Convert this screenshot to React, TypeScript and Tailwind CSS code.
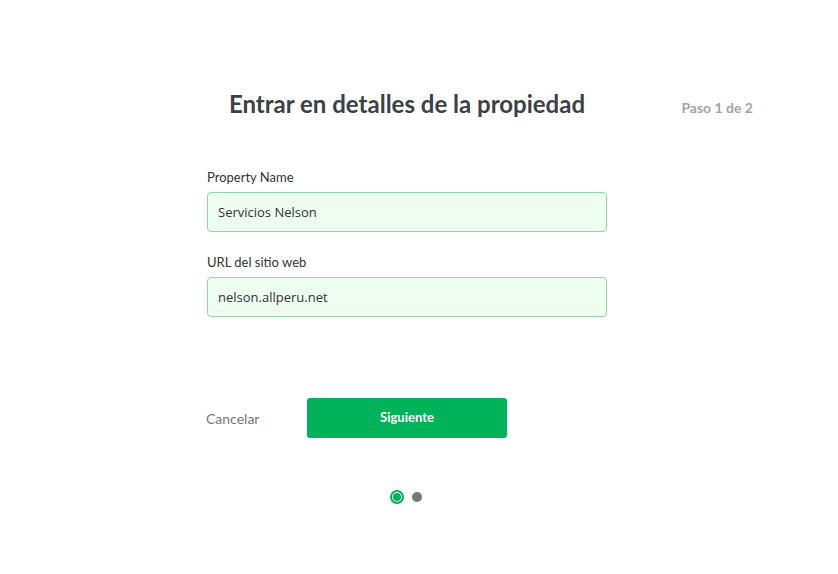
export default function App() {
  return (
    <div className="min-h-screen bg-white font-['Lato',sans-serif]">
      <div className="ml-[207px] w-[546px] pt-[90px]">
        <div className="flex items-center">
          <h1 className="w-[400px] text-center text-[24px] leading-[28px] font-bold text-[#3c4146]">
            Entrar en detalles de la propiedad
          </h1>
          <div className="flex-1 text-right text-[14px] font-bold text-[#a3a3a3] pt-[6px]">Paso 1 de 2</div>
        </div>

        <div className="mt-[50px] w-[400px] flex flex-col">
          <label className="text-[13px] leading-[18px] text-[#333]">Property Name</label>
          <input
            defaultValue="Servicios Nelson"
            className="mt-[6px] h-[40px] w-full rounded-[4px] border border-[#93d3a5] bg-[#edfdf0] px-[10px] text-[13px] text-[#333] font-['Open_Sans',sans-serif] outline-none"
          />
          <label className="mt-[21px] text-[13px] leading-[18px] text-[#333]">URL del sitio web</label>
          <input
            defaultValue="nelson.allperu.net"
            className="mt-[6px] h-[40px] w-full rounded-[4px] border border-[#93d3a5] bg-[#edfdf0] px-[10px] text-[13px] text-[#333] font-['Open_Sans',sans-serif] outline-none"
          />
        </div>

        <div className="mt-[81px] flex items-center">
          <button className="-ml-px w-[101px] text-left text-[14px] text-[#777]">Cancelar</button>
          <button className="h-[40px] w-[200px] rounded-[3px] bg-[#00b259] text-[13px] font-bold text-white">
            Siguiente
          </button>
        </div>

        <div className="mt-[52px] flex w-[398px] items-center justify-center gap-[8px]">
          <span className="flex h-[14px] w-[14px] rounded-full border-2 border-[#00b259] p-[1px]">
            <span className="block h-full w-full rounded-full bg-[#00b259]" />
          </span>
          <span className="h-[10px] w-[10px] rounded-full bg-[#777]" />
        </div>
      </div>
    </div>
  )
}
